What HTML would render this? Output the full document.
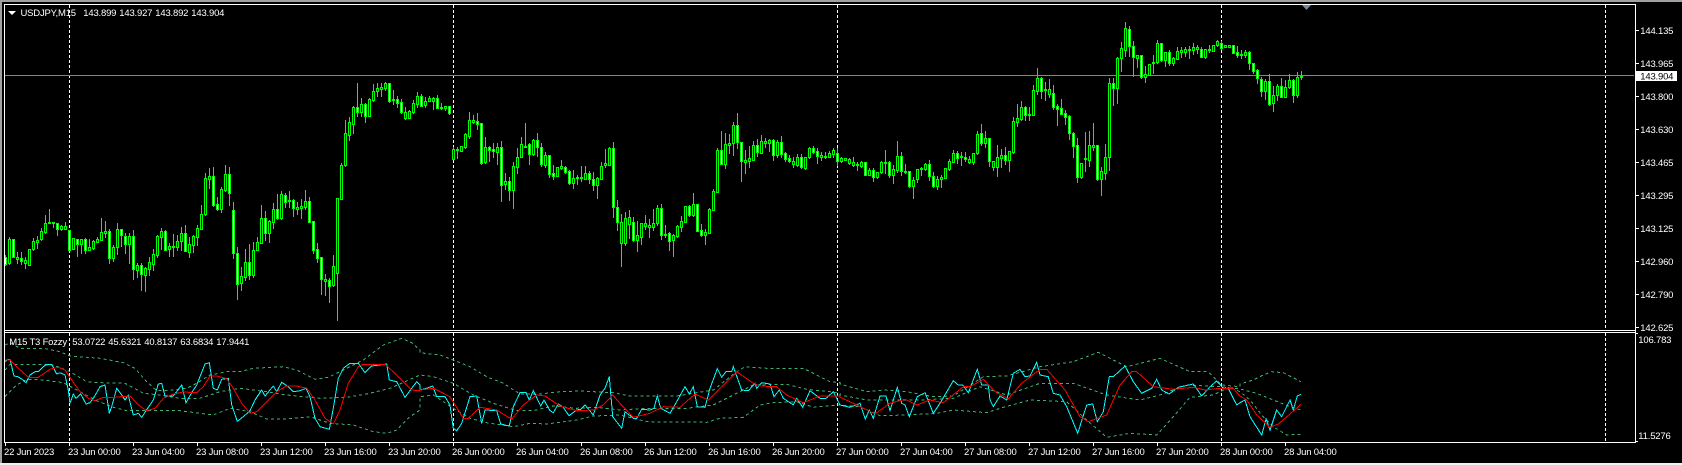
<!DOCTYPE html>
<html><head><meta charset="utf-8"><title>USDJPY,M15</title>
<style>
html,body{margin:0;padding:0;background:#000;width:1682px;height:465px;overflow:hidden}
svg{position:absolute;left:0;top:0}
text{font-family:"Liberation Sans",sans-serif;font-size:9.5px;letter-spacing:-.2px;fill:#fff}
</style></head><body>
<svg id="s" width="1682" height="465" viewBox="0 0 1682 465" xmlns="http://www.w3.org/2000/svg">
<rect width="1682" height="465" fill="#000"/>
<rect width="1682" height="2" fill="#a0a0a0"/>
<rect width="2" height="465" fill="#a0a0a0"/>
<rect y="463" width="1682" height="2" fill="#f0f0f0"/>
<g shape-rendering="crispEdges">
<g id="grid" stroke="#fff" stroke-dasharray="3 2">
<path d="M69.5 5V330M453.5 5V330M837.5 5V330M1221.5 5V330M1605.5 5V330M69.5 333V442M453.5 333V442M837.5 333V442M1221.5 333V442M1605.5 333V442"/>
</g>
<rect x="5" y="75" width="1629" height="1" fill="#778899"/>
<g id="candles"></g>
<g id="ind" fill="none"></g>
<path d="M1635.5 4V443M4.5 4V443M4 4.5H1635M4 330.5H1635M4 332.5H1635M4 442.5H1635" stroke="#fff" fill="none"/>
<path d="M1636 30.5h3M1636 63.5h3M1636 96.5h3M1636 129.5h3M1636 162.5h3M1636 195.5h3M1636 228.5h3M1636 261.5h3M1636 294.5h3M1636 327.5h3M1636 333.5h2M1636 441.5h2" stroke="#fff" fill="none"/>
<path d="M5.5 443v3M69.5 443v3M133.5 443v3M197.5 443v3M261.5 443v3M325.5 443v3M389.5 443v3M453.5 443v3M517.5 443v3M581.5 443v3M645.5 443v3M709.5 443v3M773.5 443v3M837.5 443v3M901.5 443v3M965.5 443v3M1029.5 443v3M1093.5 443v3M1157.5 443v3M1221.5 443v3M1285.5 443v3" stroke="#fff" fill="none"/>
<rect x="1635" y="71" width="42" height="10" fill="#fff"/>
</g>
<polygon points="8,11 16,11 12,15" fill="#fff"/>
<polygon points="1302,5 1311,5 1306.5,10" fill="#778899"/>
<text x="20.5" y="16">USDJPY,M15</text><text x="83.3" y="16">143.899</text><text x="119.3" y="16">143.927</text><text x="155.3" y="16">143.892</text><text x="191.3" y="16">143.904</text>
<text x="9.3" y="345">M15 T3 Fozzy</text><text x="72.3" y="345">53.0722</text><text x="108.3" y="345">45.6321</text><text x="144.3" y="345">40.8137</text><text x="180.3" y="345">63.6834</text><text x="216.3" y="345">17.9441</text>
<text x="1640.3" y="34">144.135</text><text x="1640.3" y="67">143.965</text><text x="1640.3" y="100">143.800</text><text x="1640.3" y="133">143.630</text><text x="1640.3" y="166">143.465</text><text x="1640.3" y="199">143.295</text><text x="1640.3" y="232">143.125</text><text x="1640.3" y="265">142.960</text><text x="1640.3" y="298">142.790</text><text x="1640.3" y="331">142.625</text>
<text x="1640.3" y="79.5" style="fill:#000">143.904</text>
<text x="1638.3" y="343">106.783</text><text x="1638.3" y="439">11.5276</text>
<text x="4" y="455">22 Jun 2023</text><text x="68" y="455">23 Jun 00:00</text><text x="132" y="455">23 Jun 04:00</text><text x="196" y="455">23 Jun 08:00</text><text x="260" y="455">23 Jun 12:00</text><text x="324" y="455">23 Jun 16:00</text><text x="388" y="455">23 Jun 20:00</text><text x="452" y="455">26 Jun 00:00</text><text x="516" y="455">26 Jun 04:00</text><text x="580" y="455">26 Jun 08:00</text><text x="644" y="455">26 Jun 12:00</text><text x="708" y="455">26 Jun 16:00</text><text x="772" y="455">26 Jun 20:00</text><text x="836" y="455">27 Jun 00:00</text><text x="900" y="455">27 Jun 04:00</text><text x="964" y="455">27 Jun 08:00</text><text x="1028" y="455">27 Jun 12:00</text><text x="1092" y="455">27 Jun 16:00</text><text x="1156" y="455">27 Jun 20:00</text><text x="1220" y="455">28 Jun 00:00</text><text x="1284" y="455">28 Jun 04:00</text>
</svg>
<script>
var D="257,264,255,265,1;239,263,237,264;239,257,239,257,1;257,259,252,263;258,261,252,264,1;260,263,257,268;249,265,249,265;241,249,238,250;240,242,236,248;231,239,228,240;223,232,215,233;222,223,209,223;222,223,222,227;223,229,223,235,1;226,229,225,230;226,229,222,229;230,250,230,250,1;238,249,238,249;239,244,239,256,1;239,244,239,253;239,250,238,253,1;247,250,239,250;241,248,240,249;239,242,237,242;232,240,218,240;231,233,221,237;231,258,229,263,1;247,258,245,261;229,247,223,254;229,235,229,246,1;236,244,233,253,1;236,244,233,263;236,269,230,279,1;265,270,263,277;265,274,263,290,1;268,275,267,291;262,269,257,275;254,264,249,270;236,255,235,257;231,237,228,249;231,250,230,250,1;246,249,243,256;246,247,234,256;241,247,235,250;233,241,227,250;233,251,225,251,1;244,252,237,257;236,245,235,252;228,237,225,245;214,229,205,229;178,214,173,215;176,179,168,188;176,205,167,206,1;204,209,197,210,1;189,209,187,212;174,190,165,191;174,193,167,205,1;210,253,202,258,1;253,284,247,299,1;276,283,267,290;262,277,249,280;262,275,244,279,1;250,275,242,277;242,250,237,250;218,243,205,243;218,233,211,240,1;221,233,220,242;209,222,203,228;209,218,194,219,1;194,218,191,219;195,202,193,207,1;200,201,191,207;200,208,199,216,1;207,209,202,214;206,208,199,218;201,207,190,209;201,222,197,222,1;221,250,221,253,1;249,258,243,262,1;257,279,257,294,1;279,281,274,295;280,286,278,302,1;266,285,255,286;198,273,198,320;165,199,163,199;133,165,120,166;122,135,117,140;107,124,106,133;107,112,83,116,1;104,112,98,116;104,116,103,122,1;99,116,98,116;91,100,84,101;88,91,83,96;87,89,83,96;83,88,82,90;83,101,83,102,1;99,100,90,104;99,103,96,107,1;102,112,99,113,1;112,118,107,119;111,118,110,118;103,112,100,113;96,104,92,107;96,106,94,106,1;101,105,97,107;98,101,96,101;98,101,97,109;98,108,95,108,1;107,108,103,109;106,108,106,110;106,113,106,114,1;149,159,147,159;149,150,147,158;146,151,146,151;134,147,133,148;120,136,112,138;120,122,115,123;121,124,113,129,1;123,163,123,164,1;147,162,137,163;147,150,146,161,1;149,151,143,157,1;147,152,143,164;147,185,141,201,1;181,184,173,189;181,190,177,200,1;166,190,162,208;157,167,148,173;144,157,137,157;146,147,123,147;144,154,143,164,1;140,154,139,155;140,147,133,156,1;147,164,143,166,1;155,165,152,167;155,174,155,177,1;173,176,165,179,1;167,176,167,176;166,168,160,169;167,172,166,173,1;171,183,170,184,1;178,183,170,188;177,178,175,184;177,178,166,181;173,179,166,179;173,179,171,183,1;179,185,172,190,1;178,185,177,198;166,179,162,179;163,165,149,167;148,165,147,165;148,207,142,217,1;207,222,200,230,1;222,243,214,266;218,243,212,245;217,224,210,238;222,240,217,241,1;235,240,221,251;223,237,223,244;223,226,215,229;225,227,219,237;223,227,209,230;208,223,205,225;208,235,204,239,1;234,235,225,237;233,241,232,250,1;235,240,234,256;226,236,225,237;221,227,216,231;206,222,206,222;206,215,205,216,1;204,215,193,216;204,231,204,231,1;230,235,224,236,1;232,235,229,244;209,233,208,233;191,210,189,210;150,192,148,192;150,164,131,164,1;144,164,133,168;143,145,134,153;125,143,122,155;125,142,113,148,1;142,161,142,181,1;160,162,150,173;158,161,146,167;145,160,141,160;145,152,139,156,1;141,153,135,153;141,143,138,147;140,143,139,151;140,155,139,160,1;142,155,140,157;142,154,136,157,1;153,159,152,161,1;158,161,155,162,1;161,164,157,167;157,165,154,166;157,167,154,168,1;157,168,157,169;148,157,147,158;148,152,146,153,1;151,156,148,163,1;155,157,152,160;156,157,152,158;153,157,151,157;150,154,148,157;153,161,148,165,1;158,161,157,162;158,160,158,160;159,163,158,164;162,165,157,166;164,165,162,170;162,166,161,167;162,175,162,175,1;170,175,168,175;170,177,168,181,1;172,177,172,178;162,172,161,173;162,163,150,173;162,175,161,177,1;169,175,165,183;156,170,141,172;156,171,152,175,1;171,172,164,173;171,186,171,187,1;180,186,177,198;169,179,169,182;168,169,167,175;164,169,163,170;164,176,160,180,1;176,186,172,187,1;179,186,176,189;177,179,175,187;168,178,168,178;161,169,159,170;153,162,150,162;153,158,151,163,1;156,157,152,165;157,159,152,161,1;159,162,156,163;153,162,153,164;134,153,131,154;133,143,124,145,1;138,143,131,147;138,161,138,166,1;161,167,161,170;157,167,145,176;155,158,149,167;155,160,147,164,1;151,160,151,171;121,152,117,153;118,122,104,126;107,119,101,120;107,115,106,120,1;114,115,107,120;90,115,85,115;78,91,68,94;78,91,77,98,1;89,90,82,100;89,94,79,97;93,107,85,109,1;106,109,104,125,1;108,114,99,114,1;113,117,110,124,1;116,133,115,139,1;133,146,132,157,1;145,177,138,182,1;163,177,163,178;158,159,132,171;145,160,131,166;145,147,123,150;145,179,145,180,1;171,179,167,195;157,173,144,179;83,157,78,170;83,88,78,105,1;58,88,57,103;48,58,42,71;28,50,22,56;29,46,26,56,1;46,57,41,76,1;55,58,55,67;55,77,55,78,1;74,77,66,82;64,75,64,75;62,63,55,73;43,62,40,63;43,60,43,61,1;52,60,52,66;52,63,50,65,1;58,63,57,65;51,59,47,59;50,52,47,57;49,52,47,56;49,50,46,58;47,50,43,54;47,49,45,53;49,57,47,57,1;49,57,49,58;49,50,45,52;45,51,45,51;41,45,40,46;43,48,41,49,1;45,47,45,47;45,47,45,47;45,53,45,53,1;52,55,46,57,1;54,55,50,58;52,55,50,57;52,63,51,69,1;63,71,63,73,1;70,78,69,83,1;79,91,77,96,1;81,91,79,99;81,104,74,105,1;95,103,86,111;86,95,84,100;86,97,78,97,1;87,97,80,97;80,87,74,88;80,95,79,102,1;77,95,72,97;76,77,71,79";
var h='';D.split(';').forEach(function(r,k){var a=r.split(',').map(Number),t=a[0],b=a[1],H=a[2],L=a[3],w=a[4],x=5+4*k;
h+='<rect x="'+x+'" y="'+H+'" width="1" height="'+(L-H+1)+'" fill="#0f0"/>';
h+='<rect x="'+(x-1)+'" y="'+t+'" width="3" height="'+(b-t+1)+'" fill="#0f0"/>';
if(b-t>=2)h+='<rect x="'+x+'" y="'+(t+1)+'" width="1" height="'+(b-t-1)+'" fill="'+(w?'#fff':'#000')+'"/>';});
document.getElementById('candles').innerHTML=h;
function P(segs){var o=[];segs.forEach(function(s){var x0=s[0],p=s[1],m=s[2]||99999;for(var i=0;i<p.length;i+=2){var x=x0+p[i]/3;if(x<=m)o.push(x.toFixed(1)+','+(320+p[i+1]/3).toFixed(1));}});return o.join(' ');}
var c=[[0,[15,125,24,118,30,118,42,168,54,170,66,178,78,188,90,165,105,155,115,155,130,140,140,133,155,133,170,162,180,158,195,165,205,210,210,250,220,222,228,235,242,222,258,252,270,248,282,232,300,200,315,195,328,280,335,260,350,205,365,225,375,240,385,225,400,285,415,280,425,292,445,262,460,240,475,192,485,190,495,228,520,228,545,195,558,248,575,218,590,195,615,132,628,128,640,205,652,210,665,178,685,175,695,255,712,304,730,290,750,272,765,240,785,210,795,228,820,198,830,215,845,187,865,200,880,215,900,212,918,205,930,230,945,295,960,320,988,328,1000,265,1015,175,1030,145,1050,130,1075,130,1095,158,1115,138,1160,132,1168,180,1190,185,1215,232,1235,205,1250,185,1260,195]],
[420,[0,210,20,205,38,198,50,230,75,230,90,255,100,325,110,332,125,310,150,230,170,228,185,310,195,270,230,272,242,312,268,318,280,260,300,218,318,218,328,240,340,212,362,258,372,240,390,272,400,278,415,252,430,262,447,287,470,270,482,268,495,255,520,285,540,225,555,205,568,170,578,290,605,325,615,275,640,295,650,295,665,268,690,270,702,265,712,228,722,265,750,280,770,245,795,200,808,222,820,200,832,260,855,262,870,205,892,146,905,172,918,155,935,155,940,140,965,210,985,212,1005,190,1010,205,1025,188,1050,192,1062,230,1078,210,1090,235,1120,255,1130,235,1148,262,1170,212,1200,235,1218,235,1240,215,1260,255]],
[840,[0,255,30,262,60,250,76,297,88,270,100,295,120,228,138,228,150,272,172,202,185,250,195,255,208,290,232,230,255,218,280,280,300,250,340,182,355,195,368,195,385,218,412,148,425,195,445,195,450,240,460,260,480,228,500,240,520,160,540,148,555,170,570,168,590,127,600,165,625,170,640,220,660,225,680,260,713,340,740,255,758,252,772,305,790,275,808,170,820,170,855,138,880,185,905,220,935,205,950,178,965,210,987,222,1015,202,1060,192,1085,228,1110,200,1130,183,1150,205,1165,205,1190,255,1215,240,1230,285,1260,335],1240],
[1240,[0,248,15,240,30,290,65,345,78,297,90,330,110,270,125,290,150,240,160,270,172,228,183,223]]];
var r=[[0,[15,120,30,120,50,140,85,172,115,172,150,148,175,142,195,150,215,180,240,215,265,235,285,242,310,232,340,232,390,228,415,255,440,272,465,265,490,235,520,222,550,216,590,218,610,200,630,168,650,168,680,176,700,205,725,250,750,280,770,275,800,245,830,215,860,198,890,198,920,205,945,240,975,295,1000,312,1020,270,1045,190,1075,140,1090,133,1155,133,1190,165,1235,210,1260,212]],
[420,[0,210,40,205,90,230,130,295,145,295,180,262,230,270,275,298,310,255,350,225,375,228,420,258,470,272,520,270,550,255,578,225,600,250,640,292,690,280,730,260,780,262,825,222,865,240,900,205,950,155,1000,190,1020,198,1070,200,1100,225,1150,248,1200,228,1260,228]],
[840,[0,232,40,250,105,282,150,250,195,238,230,255,270,240,310,248,370,200,390,200,430,178,465,215,505,236,545,190,600,148,620,148,675,210,720,290,745,305,800,285,840,195,875,155,890,155,940,200,1000,208,1060,202,1095,210,1140,205,1180,205,1220,240,1260,290],1240],
[1240,[0,228,20,240,50,285,90,322,115,312,150,282,183,253]]];
var u=[[0,[15,75,30,68,60,85,130,85,180,95,210,108,300,115,370,128,405,145,440,185,470,212,500,212,560,205,590,190,630,165,680,155,720,155,760,145,850,140,890,150,945,178,985,172,1030,150,1090,120,1150,75,1205,55,1235,68,1260,90]],
[420,[0,98,30,102,60,105,100,120,150,140,200,170,250,190,300,222,360,222,420,215,480,213,580,218,630,228,770,228,880,210,950,155,975,140,1040,145,1150,145,1200,170,1230,185,1260,188]],
[840,[0,192,80,215,130,210,200,215,280,230,340,228,430,170,500,168,600,140,700,125,775,97,830,125,860,140,960,115,1050,155,1105,155,1145,195,1200,200,1260,170],1240],
[1240,[0,192,40,180,70,165,95,155,130,158,183,185]]];
var m=[[0,[15,150,30,133,100,133,160,135,210,155,260,185,300,188,375,190,430,220,480,225,540,235,600,235,660,215,720,205,800,215,860,225,960,235,1040,232,1100,222,1170,205,1260,165]],
[420,[0,165,40,170,100,190,160,225,220,250,290,272,340,272,400,258,470,265,530,262,600,270,680,265,800,265,880,255,950,220,1000,195,1100,193,1160,208,1230,215,1260,220]],
[840,[0,225,80,240,150,240,240,240,340,235,420,200,500,225,600,190,700,190,800,225,900,240,960,225,1040,195,1140,200,1260,215],1240],
[1240,[0,207,50,220,100,240,150,260,183,270]]];
var l=[[0,[15,230,50,195,80,178,130,180,190,188,240,215,290,242,340,262,380,272,440,272,540,272,640,285,690,265,750,275,800,297,860,297,930,290,990,310,1060,315,1120,335,1160,340,1190,330,1230,290,1260,270]],
[420,[0,230,40,225,100,265,150,295,200,308,280,320,330,310,380,312,470,300,520,288,600,285,680,305,860,307,900,295,970,292,1020,255,1060,248,1130,245,1180,262,1260,255]],
[840,[0,255,60,260,120,287,200,285,290,280,340,270,440,278,490,262,570,240,680,245,740,300,800,352,870,340,950,345,1000,290,1050,232,1120,225,1170,200,1260,230],1240],
[1240,[0,215,30,240,65,285,100,320,140,345,183,343]]];
var g='';[u,m,l].forEach(function(a){g+='<polyline points="'+P(a)+'" stroke="#3cb371" stroke-dasharray="3 3"/>';});
g+='<polyline points="'+P(c)+'" stroke="#00ffff"/><polyline points="'+P(r)+'" stroke="#ff0000"/>';
document.getElementById('ind').innerHTML=g;
</script>
</body></html>
